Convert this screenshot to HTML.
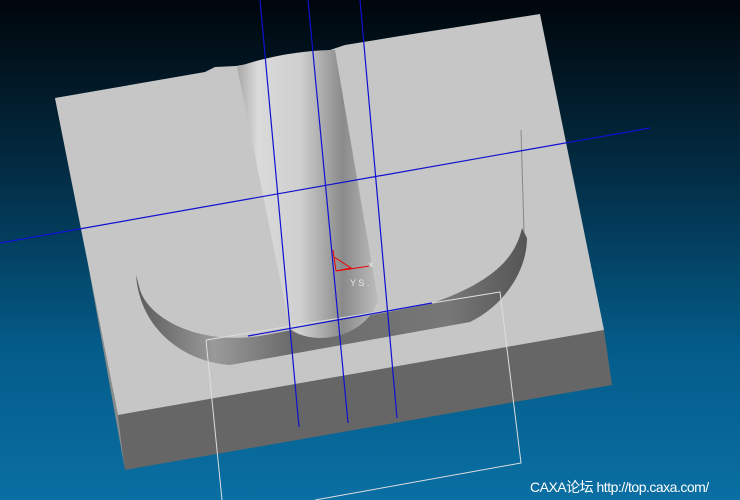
<!DOCTYPE html>
<html><head><meta charset="utf-8"><style>
html,body{margin:0;padding:0;width:740px;height:500px;overflow:hidden;}
body{background:linear-gradient(180deg,#00060b 0%,#032d45 35%,#045c8a 70%,#0a6fa3 100%);position:relative;font-family:"Liberation Sans","Noto Sans CJK SC",sans-serif;}
svg{position:absolute;left:0;top:0}
.t{position:absolute;left:530px;top:477px;color:#fff;font-size:14px;letter-spacing:-0.5px;}
</style></head><body>
<svg width="740" height="500" viewBox="0 0 740 500">
<defs>
<linearGradient id="cyl" x1="0" y1="0" x2="1" y2="0">
<stop offset="0" stop-color="#a8a8a8"/><stop offset="0.15" stop-color="#dadada"/><stop offset="0.45" stop-color="#cfcfcf"/><stop offset="0.75" stop-color="#8a8a8a"/><stop offset="1" stop-color="#bdbdbd"/>
</linearGradient>
<linearGradient id="grv" x1="0" y1="0" x2="1" y2="0">
<stop offset="0" stop-color="#5a5a5a"/><stop offset="0.2" stop-color="#9a9a9a"/><stop offset="0.4" stop-color="#6a6a6a"/><stop offset="0.8" stop-color="#777"/><stop offset="1" stop-color="#555"/>
</linearGradient>
</defs>
<!-- left side -->
<polygon points="55,98 62,120 125,470 118,415" fill="#8a8a8a"/>
<!-- front face -->
<polygon points="118,415 604,330 612,385 125,470" fill="#666"/>
<!-- top face -->
<polygon points="55,98 205,72 215,67 236,66 330,50 345,45 400,36 540,14 604,330 118,415" fill="#c6c6c6"/>
<!-- groove band -->
<path d="M136,275 C140,330 185,362 230,365 L470,322 C505,305 527,270 527,238 L522,228 C515,260 490,283 430,304 L260,336 C200,345 150,320 140,290 Z" fill="url(#grv)"/>
<!-- cylinder -->
<path d="M237,67 C262,58 300,50 335,50 L378,300 C370,325 345,338 320,338 C305,338 292,332 290,328 Z" fill="url(#cyl)"/>
<!-- gray line right -->
<line x1="521" y1="130" x2="524" y2="232" stroke="#888" stroke-width="1"/>
<!-- white rectangle -->
<polyline points="206,340 500,292 521,463 315,500" fill="none" stroke="#ddd" stroke-width="1"/>
<line x1="206" y1="340" x2="222" y2="500" stroke="#ddd" stroke-width="1"/>
<!-- blue lines -->
<g stroke="#1010d0" stroke-width="1.2">
<line x1="260" y1="0" x2="299" y2="427"/>
<line x1="308" y1="0" x2="348" y2="423"/>
<line x1="360" y1="0" x2="397" y2="418"/>
<line x1="0" y1="243" x2="650" y2="128"/>
<line x1="248" y1="336" x2="432" y2="303"/>
</g>
<!-- red triad -->
<g stroke="#e00" stroke-width="1" fill="none">
<line x1="333" y1="250" x2="336" y2="271"/>
<polyline points="334,257 351,268 336,271 370,266"/>
</g>
<text x="368" y="268" fill="#eee" font-size="10" font-family="Liberation Sans">×</text>
<text x="350" y="286" fill="#e8e8e8" font-size="9" font-family="Liberation Sans">Y S .</text>
</svg>
<div class="t">CAXA论坛 http://top.caxa.com/</div>
</body></html>
